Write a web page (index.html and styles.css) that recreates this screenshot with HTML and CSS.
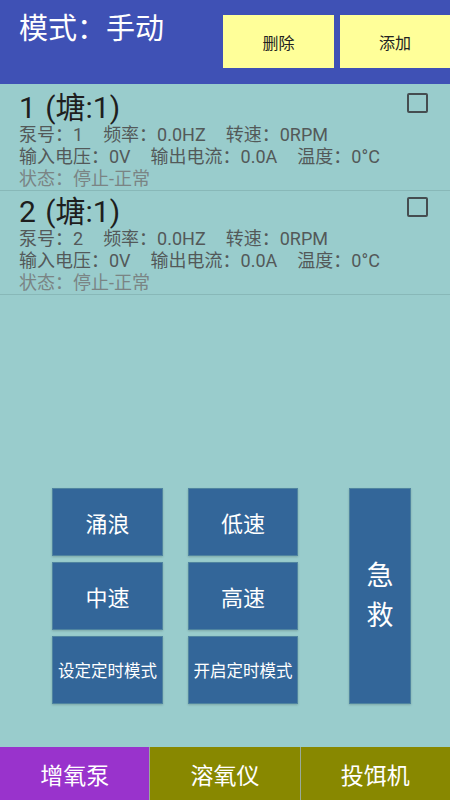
FILE: index.html
```html
<!DOCTYPE html>
<html lang="zh-CN">
<head>
<meta charset="utf-8">
<title>模式：手动</title>
<link rel="stylesheet" href="styles.css">
</head>
<body>
<div class="app">
  <header class="topbar">
    <div class="mode">模式：手动</div>
    <div class="actions">
      <button class="act act-del">删除</button>
      <button class="act act-add">添加</button>
    </div>
  </header>
  <main class="content">
    <ul class="pumps">
      <li class="pump">
        <div class="pump-head">
          <div class="pump-title">1 (塘:1)</div>
          <span class="check"></span>
        </div>
        <div class="info"><span>泵号：1</span><span>频率：0.0HZ</span><span>转速：0RPM</span></div>
        <div class="info"><span>输入电压：0V</span><span>输出电流：0.0A</span><span>温度：0°C</span></div>
        <div class="info status"><span>状态：停止-正常</span></div>
      </li>
      <li class="pump">
        <div class="pump-head">
          <div class="pump-title">2 (塘:1)</div>
          <span class="check"></span>
        </div>
        <div class="info"><span>泵号：2</span><span>频率：0.0HZ</span><span>转速：0RPM</span></div>
        <div class="info"><span>输入电压：0V</span><span>输出电流：0.0A</span><span>温度：0°C</span></div>
        <div class="info status"><span>状态：停止-正常</span></div>
      </li>
    </ul>
    <section class="controls">
      <button class="ctl">涌浪</button>
      <button class="ctl">低速</button>
      <button class="ctl ctl-rescue">急<br>救</button>
      <button class="ctl">中速</button>
      <button class="ctl">高速</button>
      <button class="ctl ctl-small">设定定时模式</button>
      <button class="ctl ctl-small">开启定时模式</button>
    </section>
  </main>
  <nav class="tabs">
    <div class="tab tab-active">增氧泵</div>
    <div class="tab">溶氧仪</div>
    <div class="tab">投饵机</div>
  </nav>
</div>
</body>
</html>
```
FILE: styles.css
```css
* { box-sizing: border-box; }
html, body { margin: 0; padding: 0; }
body {
  width: 450px;
  height: 800px;
  overflow: hidden;
  background: #99cccc;
  font-family: Roboto, "Noto Sans CJK SC", sans-serif;
}
.app {
  display: flex;
  flex-direction: column;
  width: 450px;
  height: 800px;
}
.topbar {
  flex: 0 0 84px;
  display: flex;
  align-items: flex-start;
  background: #3f51b5;
  padding-left: 19px;
}
.mode {
  margin-top: 11px;
  font-size: 29px;
  line-height: 36px;
  color: #ffffff;
}
.actions {
  margin-left: auto;
  display: flex;
  gap: 6px;
  padding-top: 15px;
}
.act {
  height: 53px;
  border: 0;
  margin: 0;
  padding: 0;
  background: #ffff99;
  color: #222222;
  font-family: Roboto, "Noto Sans CJK SC", sans-serif;
  font-size: 16px;
}
.act-del { width: 111px; }
.act-add { width: 110px; }
.content {
  flex: 1 1 auto;
  display: flex;
  flex-direction: column;
  justify-content: space-between;
}
.pumps {
  list-style: none;
  margin: 0;
  padding: 3px 0 0;
}
.pump {
  padding-top: 4px;
  border-bottom: 1px solid #88b8b8;
}
.pump-head {
  display: flex;
  justify-content: space-between;
  align-items: flex-start;
  padding: 0 22px 0 19px;
}
.pump-title {
  font-size: 30px;
  line-height: 33px;
  color: #1e1e1e;
  word-spacing: 2px;
}
.check {
  width: 21px;
  height: 20px;
  margin-top: 2px;
  border: 2px solid #454d50;
  border-radius: 2px;
}
.info {
  display: flex;
  gap: 20px;
  padding-left: 19px;
  font-size: 18px;
  line-height: 22px;
  color: #535959;
  white-space: nowrap;
}
.status { color: #7a8484; }
.controls {
  display: grid;
  grid-template-columns: 111px 110px 62px;
  grid-template-rows: 68px 68px 68px;
  column-gap: 25px;
  row-gap: 6px;
  padding-left: 52px;
  margin-bottom: 43px;
}
.ctl {
  margin: 0;
  padding: 0;
  border: 1px solid #4f84a0;
  background: #336699;
  color: #ffffff;
  font-family: Roboto, "Noto Sans CJK SC", sans-serif;
  font-size: 22px;
  box-shadow: 0 1px 2px rgba(0, 0, 0, 0.18);
}
.ctl-small { font-size: 16.5px; }
.ctl-rescue {
  grid-column: 3;
  grid-row: 1 / span 3;
  margin-left: 26px;
  width: 62px;
  font-size: 27px;
  line-height: 40px;
}
.tabs {
  flex: 0 0 53px;
  display: flex;
  gap: 1px;
  background: #99aa99;
}
.tab {
  flex: 1 1 0;
  display: flex;
  align-items: center;
  justify-content: center;
  background: #888800;
  color: #ffffff;
  font-size: 23px;
}
.tab-active { background: #9933cc; }
```
